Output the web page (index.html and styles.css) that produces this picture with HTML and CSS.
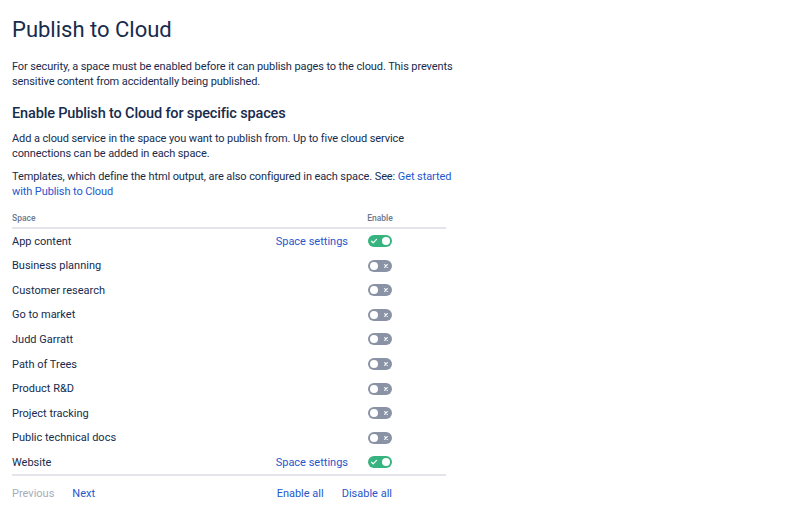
FILE: index.html
```html
<!DOCTYPE html>
<html lang="en">
<head>
<meta charset="utf-8">
<title>Publish to Cloud</title>
<link rel="stylesheet" href="styles.css">
</head>
<body>
<main class="page">
  <h1 class="title">Publish to Cloud</h1>
  <p class="text">For security, a space must be enabled before it can publish pages to the cloud. This prevents sensitive content from accidentally being published.</p>
  <h2 class="subtitle">Enable Publish to Cloud for specific spaces</h2>
  <p class="text">Add a cloud service in the space you want to publish from. Up to five cloud service connections can be added in each space.</p>
  <p class="text">Templates, which define the html output, are also configured in each space. See: <a class="link" href="#">Get started with Publish to Cloud</a></p>

  <div class="table">
    <div class="row head">
      <span class="name">Space</span>
      <span class="settings"></span>
      <span class="enable">Enable</span>
    </div>
    <div class="row"><span class="name">App content</span><a class="settings link" href="#">Space settings</a><span class="toggle on"><svg viewBox="0 0 8 8" class="tick"><path d="M1.5 4.2 L3.2 5.8 L6.5 2.4" fill="none" stroke="#fff" stroke-width="1.2" stroke-linecap="round" stroke-linejoin="round"/></svg><span class="knob"></span></span></div>
    <div class="row"><span class="name">Business planning</span><span class="settings"></span><span class="toggle"><span class="knob"></span><svg viewBox="0 0 8 8" class="cross"><path d="M2.7 2.7 L5.3 5.3 M5.3 2.7 L2.7 5.3" fill="none" stroke="#fff" stroke-width="1.2" stroke-linecap="round"/></svg></span></div>
    <div class="row"><span class="name">Customer research</span><span class="settings"></span><span class="toggle"><span class="knob"></span><svg viewBox="0 0 8 8" class="cross"><path d="M2.7 2.7 L5.3 5.3 M5.3 2.7 L2.7 5.3" fill="none" stroke="#fff" stroke-width="1.2" stroke-linecap="round"/></svg></span></div>
    <div class="row"><span class="name">Go to market</span><span class="settings"></span><span class="toggle"><span class="knob"></span><svg viewBox="0 0 8 8" class="cross"><path d="M2.7 2.7 L5.3 5.3 M5.3 2.7 L2.7 5.3" fill="none" stroke="#fff" stroke-width="1.2" stroke-linecap="round"/></svg></span></div>
    <div class="row"><span class="name">Judd Garratt</span><span class="settings"></span><span class="toggle"><span class="knob"></span><svg viewBox="0 0 8 8" class="cross"><path d="M2.7 2.7 L5.3 5.3 M5.3 2.7 L2.7 5.3" fill="none" stroke="#fff" stroke-width="1.2" stroke-linecap="round"/></svg></span></div>
    <div class="row"><span class="name">Path of Trees</span><span class="settings"></span><span class="toggle"><span class="knob"></span><svg viewBox="0 0 8 8" class="cross"><path d="M2.7 2.7 L5.3 5.3 M5.3 2.7 L2.7 5.3" fill="none" stroke="#fff" stroke-width="1.2" stroke-linecap="round"/></svg></span></div>
    <div class="row"><span class="name">Product R&amp;D</span><span class="settings"></span><span class="toggle"><span class="knob"></span><svg viewBox="0 0 8 8" class="cross"><path d="M2.7 2.7 L5.3 5.3 M5.3 2.7 L2.7 5.3" fill="none" stroke="#fff" stroke-width="1.2" stroke-linecap="round"/></svg></span></div>
    <div class="row"><span class="name">Project tracking</span><span class="settings"></span><span class="toggle"><span class="knob"></span><svg viewBox="0 0 8 8" class="cross"><path d="M2.7 2.7 L5.3 5.3 M5.3 2.7 L2.7 5.3" fill="none" stroke="#fff" stroke-width="1.2" stroke-linecap="round"/></svg></span></div>
    <div class="row"><span class="name">Public technical docs</span><span class="settings"></span><span class="toggle"><span class="knob"></span><svg viewBox="0 0 8 8" class="cross"><path d="M2.7 2.7 L5.3 5.3 M5.3 2.7 L2.7 5.3" fill="none" stroke="#fff" stroke-width="1.2" stroke-linecap="round"/></svg></span></div>
    <div class="row"><span class="name">Website</span><a class="settings link" href="#">Space settings</a><span class="toggle on"><svg viewBox="0 0 8 8" class="tick"><path d="M1.5 4.2 L3.2 5.8 L6.5 2.4" fill="none" stroke="#fff" stroke-width="1.2" stroke-linecap="round" stroke-linejoin="round"/></svg><span class="knob"></span></span></div>
  </div>

  <div class="footer">
    <div class="pager">
      <span class="disabled">Previous</span>
      <a class="link" href="#">Next</a>
    </div>
    <div class="bulk">
      <a class="link" href="#">Enable all</a>
      <a class="link" href="#">Disable all</a>
    </div>
  </div>
</main>
</body>
</html>
```

FILE: styles.css
```css
* { box-sizing: border-box; }

body {
  margin: 0;
  background: #ffffff;
  color: #172b4d;
  font-family: Roboto, "Liberation Sans", sans-serif;
  font-size: 11px;
  line-height: 15px;
}

.page {
  width: 458px;
  padding: 12px 12px;
}

.title {
  margin: 4px 0 0;
  font-size: 22px;
  line-height: 28px;
  font-weight: 400;
}

.text {
  margin: 15px -8px 0 0;
  letter-spacing: -0.1px;
}

.text + .text {
  margin-top: 8px;
}

.subtitle {
  margin: 15px 0 0;
  font-size: 14.5px;
  line-height: 20px;
  font-weight: 500;
  letter-spacing: -0.15px;
}

.subtitle + .text { margin-top: 7px; }

.link {
  color: #2557cc;
  text-decoration: none;
}

.table {
  margin-top: 13px;
  border-bottom: 2px solid #e3e5ea;
}

.row {
  display: grid;
  grid-template-columns: 1fr auto 24px;
  column-gap: 20px;
  align-items: center;
  height: 24.55px;
  padding-right: 54px;
}

.row.head {
  height: 17px;
  border-bottom: 2px solid #e3e5ea;
  font-size: 8.5px;
  line-height: 12px;
  font-weight: 500;
  color: #6b778c;
  align-items: start;
}

.enable {
  justify-self: center;
  white-space: nowrap;
}

.toggle {
  display: flex;
  align-items: center;
  justify-content: space-between;
  width: 24px;
  height: 12px;
  padding: 0 2px;
  border-radius: 6px;
  background: #8a93a5;
}

.toggle.on {
  background: #36b37e;
}

.knob {
  width: 8px;
  height: 8px;
  border-radius: 50%;
  background: #ffffff;
}

.tick, .cross {
  width: 8px;
  height: 8px;
  display: block;
}

.footer {
  display: flex;
  justify-content: space-between;
  padding-right: 54px;
  margin-top: 10px;
}

.pager, .bulk {
  display: flex;
  gap: 18px;
}

.disabled {
  color: #a5adba;
}
```
